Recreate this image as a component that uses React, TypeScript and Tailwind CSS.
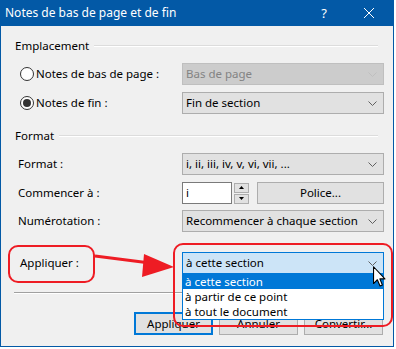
import React from "react";

const F = { fontFamily: '"Noto Sans", "Open Sans", sans-serif' };

function Chevron({ color = "#606060" }: { color?: string }) {
  return (
    <svg width="9" height="5" viewBox="0 0 9 5" className="shrink-0">
      <path d="M0.5 0.5 L4.5 4.5 L8.5 0.5" fill="none" stroke={color} strokeWidth="1" />
    </svg>
  );
}

function Combo({ text, disabled = false }: { text: string; disabled?: boolean }) {
  return (
    <div
      className={
        "w-[202px] h-[22px] flex items-center justify-between pl-[3px] pr-[6px] border " +
        (disabled
          ? "bg-[#cccccc] border-[#bfbfbf] text-[#838383]"
          : "bg-[#e1e1e1] border-[#adadad] text-black")
      }
    >
      <span className="leading-none">{text}</span>
      <Chevron color={disabled ? "#bfbfbf" : "#606060"} />
    </div>
  );
}

function Radio({ checked }: { checked: boolean }) {
  return (
    <div className="w-[14px] h-[14px] rounded-full border border-[#333333] bg-white flex items-center justify-center shrink-0">
      {checked && <div className="w-[8px] h-[8px] rounded-full bg-[#333333]" />}
    </div>
  );
}

function GroupHeader({ label }: { label: string }) {
  return (
    <div className="flex items-center h-[16px] pl-[14px] pr-[15px]">
      <span className="leading-none pr-[5px]">{label}</span>
      <div className="flex-1 h-[2px] border-t border-[#dcdcdc] border-b border-b-white mt-[-1px]" />
    </div>
  );
}

function Button({ text, focused = false }: { text: string; focused?: boolean }) {
  return (
    <div
      className={
        "w-[79px] h-[23px] flex items-center justify-center bg-[#e1e1e1] " +
        (focused ? "border-2 border-[#0078d7]" : "border border-[#adadad]")
      }
    >
      <span className="leading-none">{text}</span>
    </div>
  );
}

export default function App() {
  return (
    <div className="w-[396px] h-[349px] bg-white relative text-[11.5px] text-black" style={F}>
      <div className="w-[394px] h-[347px] border-x border-b border-[#0359a6] bg-[#f0f0f0] flex flex-col">
        {/* Title bar */}
        <div className="h-[26px] bg-[#0359a6] flex items-center text-white -mx-[1px] shrink-0">
          <span className="pl-[5px] text-[12px] leading-none flex-1">Notes de bas de page et de fin</span>
          <span className="w-[14px] text-center text-[13px] leading-none mr-[32px]">?</span>
          <svg width="12" height="12" viewBox="0 0 12 12" className="mr-[19px]">
            <path d="M1 1 L11 11 M11 1 L1 11" stroke="white" strokeWidth="1" />
          </svg>
        </div>

        {/* Emplacement */}
        <div className="mt-[12px]">
          <GroupHeader label="Emplacement" />
        </div>
        <div className="flex items-center mt-[9px]">
          <div className="w-[181px] flex items-center pl-[19px] gap-[2px]">
            <Radio checked={false} />
            <span className="leading-none">Notes de bas de page :</span>
          </div>
          <Combo text="Bas de page" disabled />
        </div>
        <div className="flex items-center mt-[7px]">
          <div className="w-[181px] flex items-center pl-[19px] gap-[2px]">
            <Radio checked />
            <span className="leading-none">Notes de fin :</span>
          </div>
          <Combo text="Fin de section" />
        </div>

        {/* Format */}
        <div className="mt-[14px]">
          <GroupHeader label="Format" />
        </div>
        <div className="flex items-center mt-[9px]">
          <div className="w-[181px] pl-[17px] leading-none">Format :</div>
          <Combo text="i, ii, iii, iv, v, vi, vii, ..." />
        </div>
        <div className="flex items-center mt-[7px]">
          <div className="w-[181px] pl-[17px] leading-none">Commencer à :</div>
          <div className="w-[50px] h-[22px] bg-white border border-[#7a7a7a] flex items-center pl-[3px]">
            <span className="leading-none">i</span>
          </div>
          <div className="flex flex-col gap-[1px] ml-[2px] w-[15px]">
            <div className="h-[10px] bg-[#e1e1e1] border border-[#adadad] flex items-center justify-center">
              <svg width="5" height="3" viewBox="0 0 5 3"><path d="M0 3 L2.5 0 L5 3 Z" fill="#000" /></svg>
            </div>
            <div className="h-[10px] bg-[#e1e1e1] border border-[#adadad] flex items-center justify-center">
              <svg width="5" height="3" viewBox="0 0 5 3"><path d="M0 0 L2.5 3 L5 0 Z" fill="#000" /></svg>
            </div>
          </div>
          <div className="w-[127px] h-[22px] ml-[8px] bg-[#e1e1e1] border border-[#adadad] flex items-center justify-center">
            <span className="leading-none">Police...</span>
          </div>
        </div>
        <div className="flex items-center mt-[6px]">
          <div className="w-[181px] pl-[17px] leading-none">Numérotation :</div>
          <Combo text="Recommencer à chaque section" />
        </div>

        {/* Appliquer */}
        <div className="flex items-center mt-[20px]">
          <div className="w-[181px] pl-[19px] leading-none">Appliquer :</div>
          <div className="w-[202px] h-[22px] flex items-center justify-between pl-[3px] pr-[6px] border border-[#0078d7] bg-[#cce4f7]">
            <span className="leading-none">à cette section</span>
            <Chevron color="#606060" />
          </div>
        </div>

        {/* Separator */}
        <div className="mt-[18px] ml-[13px] mr-[11px] h-[2px] border-t border-[#a0a0a0] border-b border-b-white" />

        {/* Buttons */}
        <div className="flex justify-end gap-[6px] pr-[10px] mt-[18px]">
          <Button text="Appliquer" focused />
          <Button text="Annuler" />
          <Button text="Convertir..." />
        </div>
      </div>

      {/* Dropdown list overlay */}
      <div className="absolute left-[182px] top-[273px] w-[202px] h-[47px] bg-white border border-[#0078d7] flex flex-col">
        <div className="h-[15px] bg-[#0078d7] text-white flex items-center pl-[2px]">
          <span className="leading-none">à cette section</span>
        </div>
        <div className="h-[15px] flex items-center pl-[2px]">
          <span className="leading-none">à partir de ce point</span>
        </div>
        <div className="h-[15px] flex items-center pl-[2px]">
          <span className="leading-none">à tout le document</span>
        </div>
      </div>

      {/* Red annotations */}
      <div className="absolute left-[8px] top-[245px] w-[87px] h-[38px] border-2 border-[#ee1c24] rounded-[10px]" />
      <div className="absolute left-[173px] top-[243px] w-[220px] h-[84px] border-2 border-[#ee1c24] rounded-[10px]" />
      <svg className="absolute left-0 top-0" width="396" height="349" viewBox="0 0 396 349">
        <line x1="95" y1="256" x2="150" y2="263" stroke="#ee1c24" strokeWidth="3" />
        <polygon points="144,254 174,267 142,277" fill="#ee1c24" />
      </svg>

      {/* Cursor */}
      <svg className="absolute left-[373px] top-[266px]" width="13" height="21" viewBox="0 0 12 19">
        <path
          d="M0.5 0.5 L0.5 16 L4 12.5 L6.5 18.3 L8.7 17.3 L6.3 11.7 L11 11.7 Z"
          fill="white"
          stroke="black"
          strokeWidth="1"
          strokeLinejoin="round"
        />
      </svg>
    </div>
  );
}
